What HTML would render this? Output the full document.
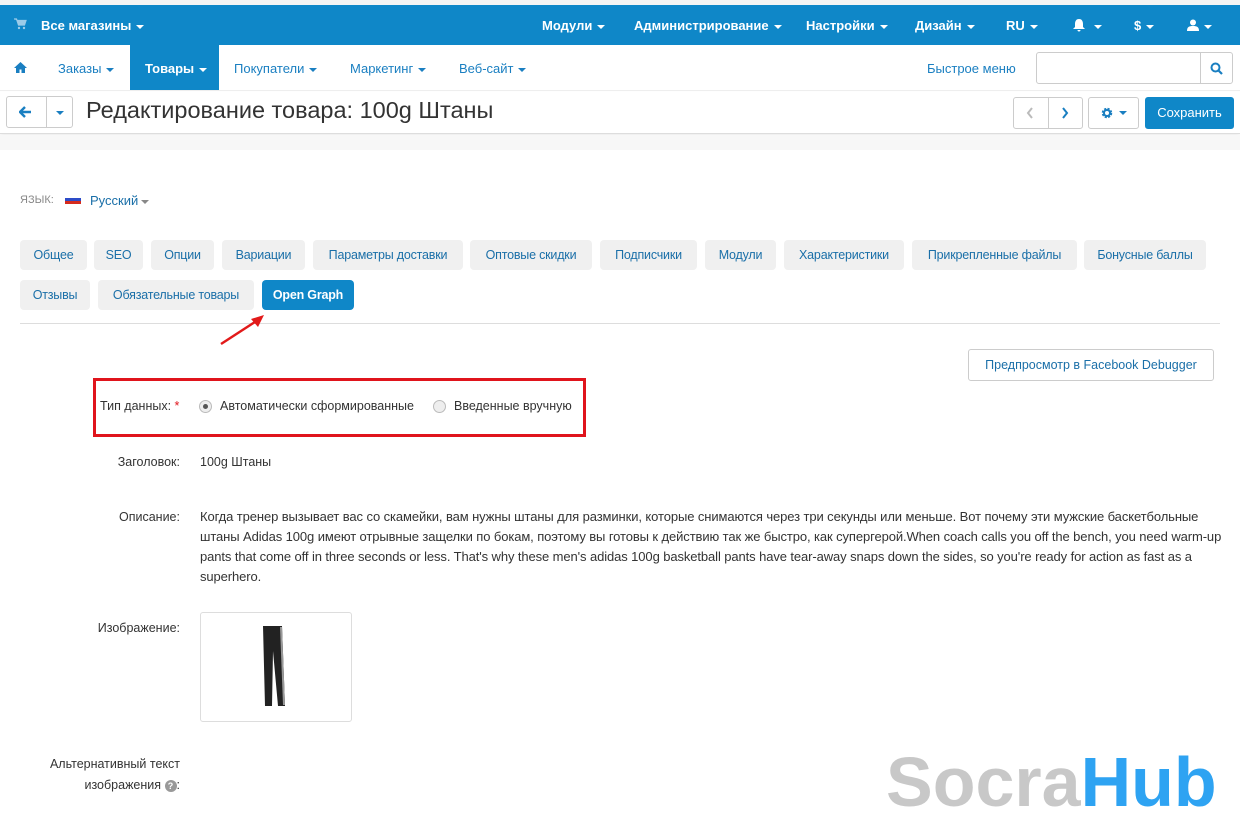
<!DOCTYPE html>
<html><head><meta charset="utf-8"><style>
*{box-sizing:border-box;margin:0;padding:0}
body{width:1240px;height:820px;overflow:hidden;background:#fff;font-family:"Liberation Sans","DejaVu Sans",sans-serif;font-size:13px;color:#333;position:relative}
.abs{position:absolute}
.top{top:5px;left:0;width:1240px;height:40px;background:#0f87c8;color:#fff;font-weight:bold;font-size:13px}
.top span{position:absolute;top:13px;white-space:nowrap}
.car{display:inline-block;width:0;height:0;border-left:4px solid transparent;border-right:4px solid transparent;border-top:4px solid currentColor;vertical-align:middle;margin-left:5px}
.nav{top:45px;height:46px;width:1240px;border-bottom:1px solid #eee}
.nav span{position:absolute;top:16px;color:#1a7fc1;white-space:nowrap}
.tb{top:92px;height:42px;width:1240px;border-bottom:1px solid #ddd;box-shadow:0 2px 4px rgba(0,0,0,.08)}
.btn{position:absolute;border:1px solid #ccc;border-radius:3px;background:#fff}
.tab{position:absolute;height:30px;line-height:30px;text-align:center;background:#f0f0f0;border-radius:4px;color:#1a6fa8;font-size:12.5px;white-space:nowrap;letter-spacing:-.2px}
.lbl{position:absolute;text-align:right;color:#333;width:180px;left:0}
</style></head><body>
<div class="abs" style="top:0;left:0;width:1240px;height:5px;background:#f4f4f4"></div>
<div class="abs top">
<svg class="abs" style="left:14px;top:13px" width="13" height="12" viewBox="0 0 13 12"><path d="M0 1h2.5l2 6h6l1.5-4.5H3.5" fill="#9ccbe8" stroke="#9ccbe8" stroke-width="1.2"/><circle cx="5" cy="10" r="1.2" fill="#9ccbe8"/><circle cx="10" cy="10" r="1.2" fill="#9ccbe8"/></svg>
<span style="left:41px">Все магазины<i class="car"></i></span>
<span style="left:542px">Модули<i class="car"></i></span>
<span style="left:634px">Администрирование<i class="car"></i></span>
<span style="left:806px">Настройки<i class="car"></i></span>
<span style="left:915px">Дизайн<i class="car"></i></span>
<span style="left:1006px">RU<i class="car"></i></span>
<span style="left:1073px"><svg width="12" height="13" viewBox="0 0 12 13" style="vertical-align:-2px"><path d="M6 0c-3 0-4 2.5-4 5v3L0 10h12l-2-2V5c0-2.5-1-5-4-5z M4.5 11a1.5 1.5 0 0 0 3 0z" fill="#fff"/></svg><i class="car" style="margin-left:9px"></i></span>
<span style="left:1134px">$<i class="car"></i></span>
<span style="left:1187px"><svg width="12" height="12" viewBox="0 0 12 12" style="vertical-align:-1px"><circle cx="6" cy="3.5" r="3" fill="#fff"/><path d="M0 12c0-4 2-5 6-5s6 1 6 5z" fill="#fff"/></svg><i class="car"></i></span>
</div>
<div class="abs nav">
<svg class="abs" style="left:14px;top:17px" width="13" height="11" viewBox="0 0 13 11"><path d="M6.5 0L0 6h2v5h3.5V7.5h2V11H11V6h2z" fill="#1a7fc1"/></svg>
<span style="left:58px">Заказы<i class="car"></i></span>
<div class="abs" style="left:130px;top:0;width:89px;height:45px;background:#0f87c8"></div>
<span style="left:145px;color:#fff;font-weight:bold">Товары<i class="car"></i></span>
<span style="left:234px">Покупатели<i class="car"></i></span>
<span style="left:350px">Маркетинг<i class="car"></i></span>
<span style="left:459px">Веб-сайт<i class="car"></i></span>
<span style="left:927px">Быстрое меню</span>
<div class="btn" style="left:1036px;top:7px;width:197px;height:32px"></div>
<div class="abs" style="left:1200px;top:8px;width:1px;height:30px;background:#ccc"></div>
<svg class="abs" style="left:1210px;top:17px" width="13" height="13" viewBox="0 0 13 13"><circle cx="5.5" cy="5.5" r="4" fill="none" stroke="#1a7fc1" stroke-width="2"/><path d="M8.5 8.5l3.5 3.5" stroke="#1a7fc1" stroke-width="2.2"/></svg>
</div>
<div class="abs tb">
<div class="btn" style="left:6px;top:4px;width:67px;height:32px"></div>
<div class="abs" style="left:46px;top:5px;width:1px;height:30px;background:#ccc"></div>
<svg class="abs" style="left:19px;top:14px" width="13" height="12" viewBox="0 0 13 12"><path d="M6 1L1 6l5 5M1 6h11" fill="none" stroke="#1a7fc1" stroke-width="2.4"/></svg>
<i class="car abs" style="left:51px;top:19px;color:#1a7fc1"></i>
<div class="abs" style="left:86px;top:5px;font-size:23.5px;color:#333;white-space:nowrap">Редактирование товара: 100g Штаны</div>
<div class="btn" style="left:1013px;top:5px;width:70px;height:32px"></div>
<div class="abs" style="left:1048px;top:6px;width:1px;height:30px;background:#ccc"></div>
<svg class="abs" style="left:1026px;top:15px" width="8" height="12" viewBox="0 0 8 12"><path d="M6 1L2 6l4 5" fill="none" stroke="#bbb" stroke-width="2"/></svg>
<svg class="abs" style="left:1061px;top:15px" width="8" height="12" viewBox="0 0 8 12"><path d="M2 1l4 5-4 5" fill="none" stroke="#1a7fc1" stroke-width="2"/></svg>
<div class="btn" style="left:1088px;top:5px;width:51px;height:32px"></div>
<svg class="abs" style="left:1101px;top:15px" width="12" height="12" viewBox="0 0 12 12"><circle cx="6" cy="6" r="4" fill="none" stroke="#1a7fc1" stroke-width="2.5" stroke-dasharray="2 1.2"/><circle cx="6" cy="6" r="3" fill="none" stroke="#1a7fc1" stroke-width="2"/></svg>
<i class="car abs" style="left:1114px;top:19px;color:#1a7fc1"></i>
<div class="abs" style="left:1145px;top:5px;width:89px;height:32px;background:#0f87c8;border-radius:3px;color:#fff;text-align:center;line-height:32px">Сохранить</div>
</div>
<div class="abs" style="top:135px;left:0;width:1240px;height:15px;background:#f7f7f7"></div>
<div class="abs" style="left:20px;top:194px;font-size:11px;color:#888">ЯЗЫК:</div>
<div class="abs" style="left:65px;top:195px;width:16px;height:9px;background:linear-gradient(#fff 0 33%,#2d4cc8 33% 66%,#d52b1e 66%)"></div>
<div class="abs" style="left:90px;top:193px;color:#1a6fa8">Русский<i class="car" style="color:#888;margin-left:3px"></i></div>
<div class="tab" style="left:20px;top:240px;width:67px">Общее</div>
<div class="tab" style="left:94px;top:240px;width:49px">SEO</div>
<div class="tab" style="left:151px;top:240px;width:63px">Опции</div>
<div class="tab" style="left:222px;top:240px;width:83px">Вариации</div>
<div class="tab" style="left:313px;top:240px;width:150px">Параметры доставки</div>
<div class="tab" style="left:470px;top:240px;width:122px">Оптовые скидки</div>
<div class="tab" style="left:600px;top:240px;width:97px">Подписчики</div>
<div class="tab" style="left:705px;top:240px;width:71px">Модули</div>
<div class="tab" style="left:784px;top:240px;width:120px">Характеристики</div>
<div class="tab" style="left:912px;top:240px;width:165px">Прикрепленные файлы</div>
<div class="tab" style="left:1084px;top:240px;width:122px">Бонусные баллы</div>
<div class="tab" style="left:20px;top:280px;width:70px">Отзывы</div>
<div class="tab" style="left:98px;top:280px;width:156px">Обязательные товары</div>
<div class="tab" style="left:262px;top:280px;width:92px;background:#0f87c8;color:#fff;font-weight:bold">Open Graph</div>
<div class="abs" style="left:20px;top:323px;width:1200px;height:1px;background:#ddd"></div>
<svg class="abs" style="left:218px;top:312px" width="50" height="36" viewBox="0 0 50 36"><path d="M3 32L40 8" stroke="#e21a1a" stroke-width="2.5"/><path d="M46 3L33 7l7 8z" fill="#e21a1a"/></svg>
<div class="btn" style="left:968px;top:349px;width:246px;height:32px;text-align:center;line-height:30px;color:#1a6fa8;font-size:12.5px">Предпросмотр в Facebook Debugger</div>
<div class="abs" style="left:93px;top:378px;width:493px;height:59px;border:3px solid #e0141c"></div>
<div class="abs" style="left:100px;top:399px;font-size:12.5px">Тип данных: <span style="color:#e0141c">*</span></div>
<div class="abs" style="left:199px;top:400px;width:13px;height:13px;border-radius:50%;border:1px solid #bbb;background:#eee"><div style="width:5px;height:5px;border-radius:50%;background:#555;margin:3px"></div></div>
<div class="abs" style="left:220px;top:399px;font-size:12.5px">Автоматически сформированные</div>
<div class="abs" style="left:433px;top:400px;width:13px;height:13px;border-radius:50%;border:1px solid #bbb;background:#eee"></div>
<div class="abs" style="left:454px;top:399px;font-size:12.5px">Введенные вручную</div>
<div class="lbl" style="top:455px;font-size:12.5px">Заголовок:</div>
<div class="abs" style="left:200px;top:455px;font-size:12.5px">100g Штаны</div>
<div class="lbl" style="top:510px;font-size:12.5px">Описание:</div>
<div class="abs" style="left:200px;top:507px;width:1022px;line-height:20px;font-size:13px;letter-spacing:-.1px">Когда тренер вызывает вас со скамейки, вам нужны штаны для разминки, которые снимаются через три секунды или меньше. Вот почему эти мужские баскетбольные штаны Adidas 100g имеют отрывные защелки по бокам, поэтому вы готовы к действию так же быстро, как супергерой.When coach calls you off the bench, you need warm-up pants that come off in three seconds or less. That's why these men's adidas 100g basketball pants have tear-away snaps down the sides, so you're ready for action as fast as a superhero.</div>
<div class="lbl" style="top:621px;font-size:12.5px">Изображение:</div>
<div class="btn" style="left:200px;top:612px;width:152px;height:110px;border-color:#ddd"></div>
<svg class="abs" style="left:260px;top:624px" width="30" height="84" viewBox="0 0 30 84"><path d="M3 2h19l3 80h-7l-5-55-1 55H5z" fill="#222"/><path d="M21 3l3 78" stroke="#999" stroke-width="2"/></svg>
<div class="lbl" style="top:754px;line-height:21px;font-size:12.5px">Альтернативный текст<br>изображения <span style="display:inline-block;width:12px;height:12px;border-radius:50%;background:#999;color:#fff;font-size:9px;text-align:center;line-height:12px;font-weight:bold">?</span>:</div>
<div class="abs" style="left:886px;top:742px;font-size:70px;font-weight:bold;color:#c8c8c8;line-height:80px;white-space:nowrap">Socra<span style="color:#2ea3f2">Hub</span></div>
</body></html>
